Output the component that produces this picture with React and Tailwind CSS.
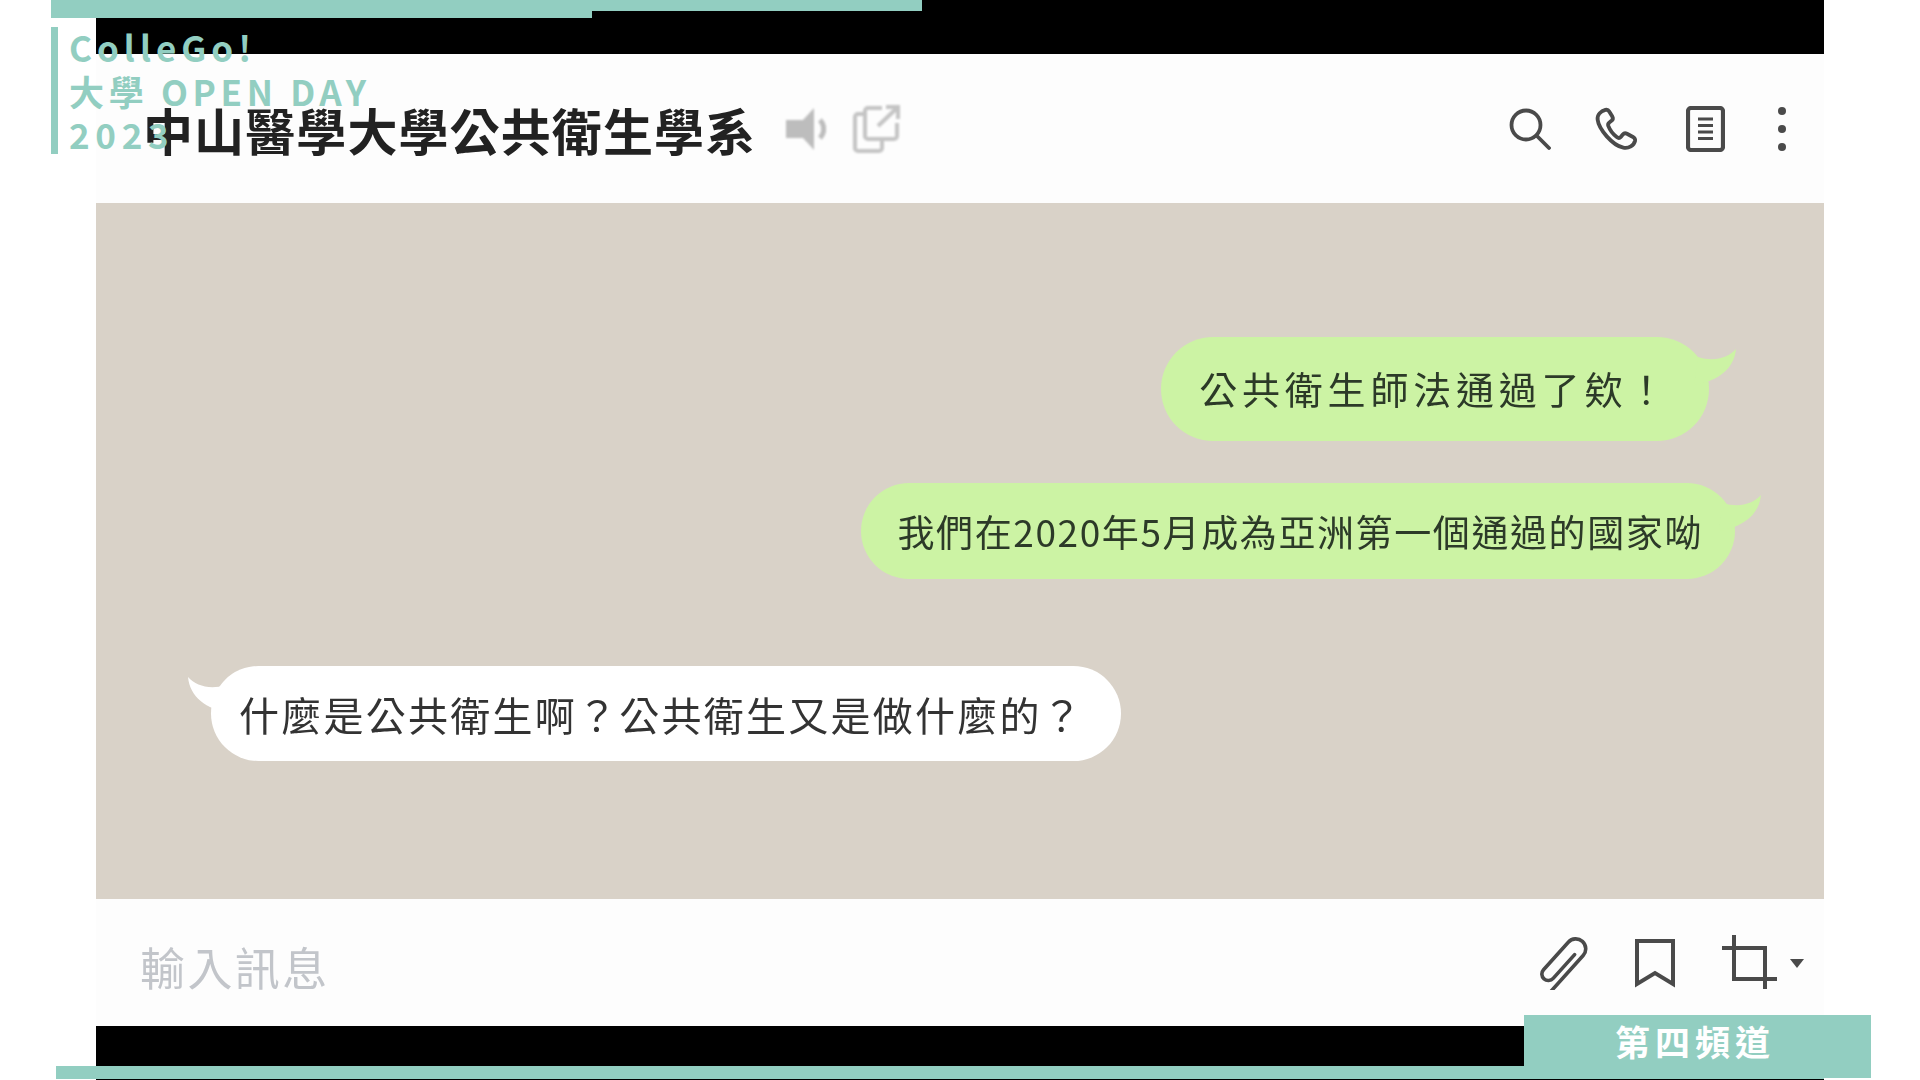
const cjk = "font-['Noto_Sans_CJK_TC','Liberation_Sans',sans-serif]";

function Tail({ flip, className }) {
  return (
    <svg className={className} width="48" height="36" viewBox="0 0 48 36" fill="currentColor">
      {flip ? (
        <path d="M0 0 C8 9 22 13 38 8 L42 36 C18 32 2 20 0 0 Z" />
      ) : (
        <path d="M48 0 C40 9 26 13 10 8 L6 36 C30 32 46 20 48 0 Z" />
      )}
    </svg>
  );
}

function IconBtn({ children, className }) {
  return <div className={"shrink-0 text-[#4a4a4a] blur-[0.6px] " + className}>{children}</div>;
}

function Header() {
  return (
    <div className="h-[149px] bg-[#fdfdfd] flex items-center pl-[47px] pr-[38px]">
      <h1 className={"text-[50px] leading-none font-bold text-[#222] tracking-[1.1px] mt-[1px] blur-[0.4px] " + cjk}>
        中山醫學大學公共衛生學系
      </h1>
      <svg className="ml-[30px] blur-[0.8px]" width="40" height="44" viewBox="0 0 40 44" fill="#bdbdbd">
        <path d="M0 13 H17 L28 1 V43 L17 31 H0 Z" />
        <path d="M34 13 C39 18 39 26 34 31" fill="none" stroke="#bdbdbd" strokeWidth="5" />
      </svg>
      <svg className="ml-[24px] blur-[0.8px]" width="50" height="48" viewBox="0 0 50 48" fill="none" stroke="#c4c4c4" strokeWidth="4">
        <path d="M15 9 H8 A3 3 0 0 0 5 12 V43 A3 3 0 0 0 8 46 H29 A3 3 0 0 0 32 43 V34" />
        <path d="M32 3 H18 A3 3 0 0 0 15 6 V31 A3 3 0 0 0 18 34 H44 A3 3 0 0 0 47 31 V18" />
        <path d="M28 21 L47 3 M36 2 H48 V14" />
      </svg>
      <div className="flex-1" />
      <IconBtn className="mr-[43px]">
        <svg width="42" height="42" viewBox="0 0 42 42" fill="none" stroke="currentColor" strokeWidth="3.8">
          <circle cx="17" cy="17" r="14.5" />
          <path d="M27.5 27.5 L40 40" strokeLinecap="round" />
        </svg>
      </IconBtn>
      <IconBtn className="mr-[48px]">
        <svg width="44" height="46" viewBox="0 0 24 24" fill="none" stroke="currentColor" strokeWidth="2.1" strokeLinejoin="round">
          <path d="M6.2 1.6 C4 2.2 1.6 4 2 7 C2.6 12 10 21 16 22.2 C19 22.8 21.8 21 22.4 18.4 C22.6 17.4 22 16.8 21 16.2 L18 14.6 C17 14.1 16.3 14.3 15.7 15 L14.6 16.3 C14 17 13.2 17 12.4 16.4 C10.6 15 8.6 12.4 7.8 10.3 C7.5 9.4 7.8 8.8 8.5 8.3 L9.7 7.4 C10.4 6.8 10.4 6 10 5.2 L8.3 2.4 C7.8 1.6 7.1 1.4 6.2 1.6 Z" />
        </svg>
      </IconBtn>
      <IconBtn className="mr-[53px]">
        <svg width="39" height="46" viewBox="0 0 39 46" fill="none" stroke="currentColor">
          <rect x="2" y="2" width="35" height="42" rx="3" strokeWidth="4.2" />
          <path d="M12 13 H27 M12 19.5 H27 M12 26 H27 M12 32.5 H27" strokeWidth="3" />
        </svg>
      </IconBtn>
      <IconBtn className="flex flex-col gap-[10px]">
        <span className="block w-[8px] h-[8px] rounded-full bg-[#4a4a4a]" />
        <span className="block w-[8px] h-[8px] rounded-full bg-[#4a4a4a]" />
        <span className="block w-[8px] h-[8px] rounded-full bg-[#4a4a4a]" />
      </IconBtn>
    </div>
  );
}

function Chat() {
  return (
    <div className={"h-[696px] bg-[#d9d2c8] flex flex-col pt-[134px] " + cjk}>
      <div className="relative self-end mr-[115px] h-[104px] flex items-center pb-[2px] pl-[38px] pr-[39px] rounded-[52px] bg-[#ccf3a4] text-[38px] leading-none tracking-[4.8px] text-[#2c3a28] whitespace-nowrap blur-[0.4px]">
        公共衛生師法通過了欸！
        <Tail className="absolute -right-[27px] top-[12px] text-[#ccf3a4]" />
      </div>
      <div className="relative self-end mr-[89px] mt-[42px] h-[96px] flex items-center pl-[37px] pr-[32px] rounded-[48px] bg-[#ccf3a4] text-[37px] leading-none tracking-[1.6px] text-[#2c3a28] whitespace-nowrap blur-[0.4px]">
        我們在2020年5月成為亞洲第一個通過的國家呦
        <Tail className="absolute -right-[26px] top-[12px] text-[#ccf3a4]" />
      </div>
      <div className="relative self-start ml-[115px] mt-[87px] h-[95px] flex items-center pl-[28px] pr-[37px] rounded-[48px] bg-white text-[40px] leading-none tracking-[2.25px] text-[#333] whitespace-nowrap blur-[0.4px]">
        什麼是公共衛生啊？公共衛生又是做什麼的？
        <Tail flip className="absolute -left-[23px] top-[11px] text-white" />
      </div>
    </div>
  );
}

function InputBar() {
  return (
    <div className="h-[127px] bg-[#fdfdfd] flex items-center pl-[44px] pr-[20px]">
      <div className={"text-[45px] leading-none tracking-[2.4px] text-[#c2c5ca] mt-[8px] blur-[0.5px] " + cjk}>輸入訊息</div>
      <div className="flex-1" />
      <IconBtn className="mr-[44px]">
        <svg width="54" height="54" viewBox="-27 -27 54 54" fill="none" stroke="currentColor" strokeWidth="3.6" strokeLinecap="round">
          <g transform="rotate(42)">
            <path d="M10 29 V-19 A10 10 0 0 0 -10 -19 V18 A6.5 6.5 0 0 0 3 18 V-14" />
          </g>
        </svg>
      </IconBtn>
      <IconBtn className="mr-[46px]">
        <svg width="42" height="50" viewBox="0 0 42 50" fill="none" stroke="currentColor" strokeWidth="4" strokeLinejoin="miter">
          <path d="M3 3 H39 V46 L21 35 L3 46 Z" />
        </svg>
      </IconBtn>
      <IconBtn className="mr-[12px]">
        <svg width="56" height="56" viewBox="0 0 56 56" fill="none" stroke="currentColor" strokeWidth="4">
          <path d="M0 13 H43 V54" />
          <path d="M12 0 V44 H55" />
        </svg>
      </IconBtn>
      <div className="w-0 h-0 mt-[2px] border-l-[7px] border-r-[7px] border-t-[9px] border-l-transparent border-r-transparent border-t-[#4a4a4a] blur-[0.4px]" />
    </div>
  );
}

export default function App() {
  return (
    <div className="relative w-[1920px] h-[1080px] overflow-hidden bg-white">
      {/* video frame */}
      <div className="mx-[96px] h-full bg-black flex flex-col pt-[54px]">
        <Header />
        <Chat />
        <InputBar />
      </div>

      {/* channel overlay */}
      <div className="absolute left-[51px] top-0 w-[541px] h-[18px] bg-[#92cec1]" />
      <div className="absolute left-[592px] top-0 w-[330px] h-[11px] bg-[#92cec1]" />
      <div className="absolute left-[51px] top-[27px] w-[7px] h-[127px] bg-[#92cec1]" />
      <div className={"absolute left-[69px] top-[25px] text-[35px] leading-[43.5px] font-bold text-[#92cec1] whitespace-nowrap " + cjk}>
        <div className="tracking-[5px]">ColleGo!</div>
        <div className="tracking-[4.65px]">大學 OPEN DAY</div>
        <div className="tracking-[5.7px]">2023</div>
      </div>
      <div className="absolute left-[56px] top-[1066px] w-[1768px] h-[13px] bg-[#92cec1]" />
      <div className={"absolute left-[1524px] top-[1015px] w-[347px] h-[63px] pb-[12px] pr-[5px] bg-[#92cec1] flex items-center justify-center text-[35px] leading-none font-bold tracking-[5px] text-white " + cjk}>
        第四頻道
      </div>
    </div>
  );
}
